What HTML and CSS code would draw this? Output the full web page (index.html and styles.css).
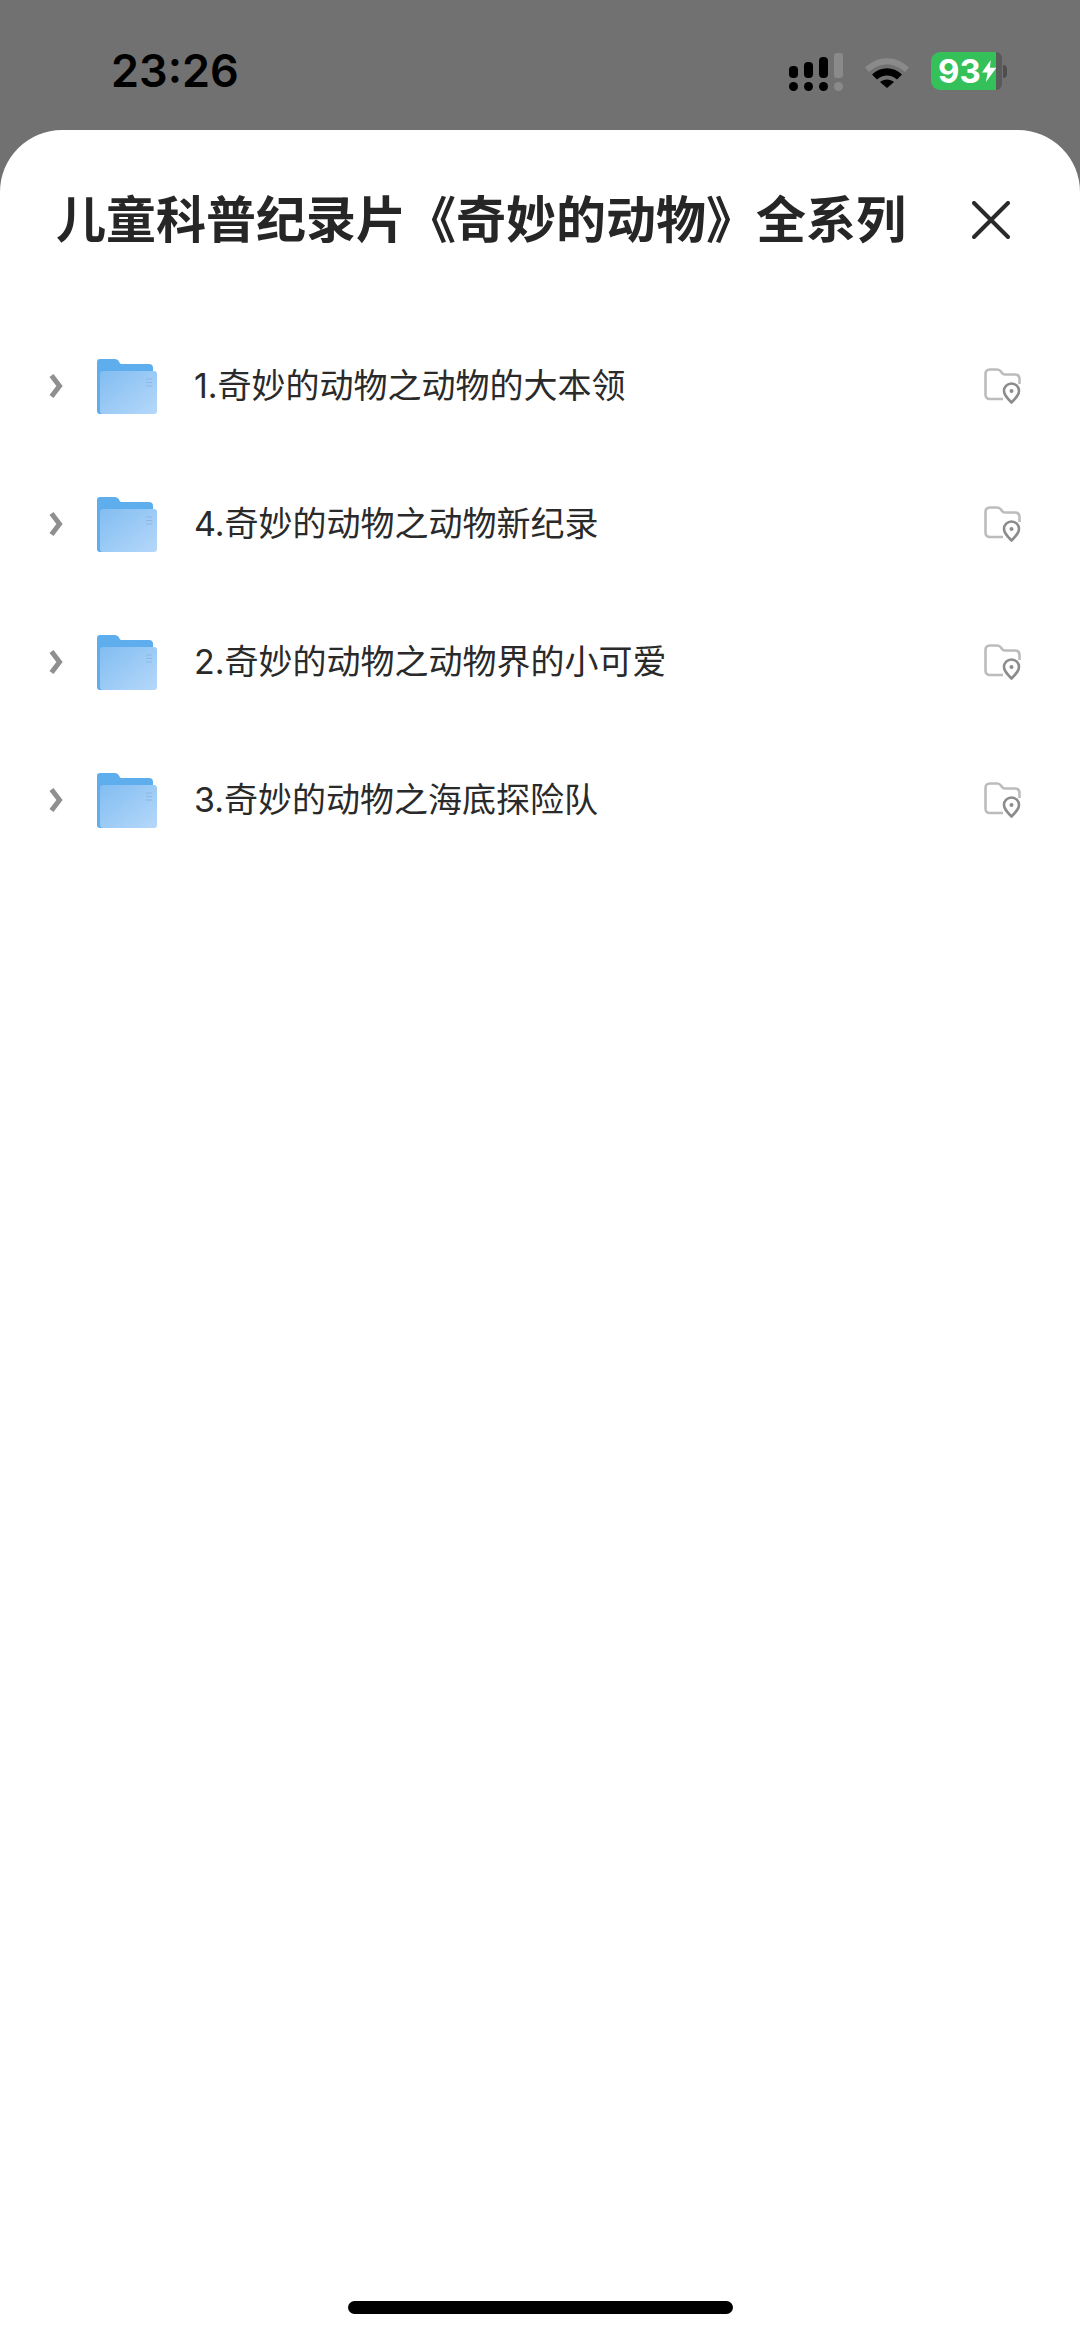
FILE: index.html
```html
<!DOCTYPE html>
<html lang="zh">
<head>
<meta charset="utf-8">
<title>儿童科普纪录片《奇妙的动物》全系列</title>
<link rel="stylesheet" href="styles.css">
</head>
<body>
<svg class="defs" width="0" height="0" aria-hidden="true">
  <defs>
    <linearGradient id="fold" x1="0" y1="0" x2="1" y2="1">
      <stop offset="0" stop-color="#82bdf1"/>
      <stop offset="1" stop-color="#b5d8fa"/>
    </linearGradient>
    <symbol id="chev" viewBox="0 0 14 26">
      <path d="M2.5 2.5 L10.5 13 L2.5 23.5" fill="none" stroke="#8f8f8f" stroke-width="5"/>
    </symbol>
    <symbol id="folder" viewBox="0 0 60 55">
      <path d="M3 0H18Q21 0 22 2.500L23 4.500Q24 5 26 5H52Q56 5 56 9V14H6V55H3Q0 55 0 52V3Q0 0 3 0Z" fill="#5eaded"/>
      <rect x="3" y="12" width="57" height="43" rx="3" fill="url(#fold)"/>
      <path d="M49 20h6M49 23.500h6M49 27h6" stroke="#8db8e0" stroke-width="1.200"/>
    </symbol>
    <symbol id="loc" viewBox="0 0 37 36">
      <path d="M19 31H6Q1.500 31 1.500 26.500V6Q1.500 1.500 6 1.500H13Q15.500 1.500 17 3.500L18 5Q19 6.500 21 6.500H31Q35.500 6.500 35.500 11V16" fill="none" stroke="#bcbcbc" stroke-width="2.600"/>
      <path d="M27.500 34.500C23 30 20 27 20 23A7.500 7.500 0 0 1 35 23C35 27 32 30 27.500 34.500Z" fill="#fff" stroke="#8c8c8c" stroke-width="2.600" stroke-linejoin="round"/>
      <circle cx="27.500" cy="23" r="2" fill="#8c8c8c"/>
    </symbol>
  </defs>
</svg>
<div class="screen">
  <header class="status">
    <span class="time">23:26</span>
    <div class="status-icons">
      <svg class="signal" width="54" height="38" viewBox="0 0 54 38">
        <rect x="0" y="13" width="9" height="12" rx="4"/>
        <rect x="15" y="9" width="9" height="16" rx="4"/>
        <rect x="30" y="4" width="9" height="21" rx="4"/>
        <rect x="45" y="0" width="9" height="25" rx="3" fill="#8a8a8a"/>
        <rect x="0" y="29" width="9" height="9" rx="4.500"/>
        <rect x="15" y="29" width="9" height="9" rx="4.500"/>
        <rect x="30" y="29" width="9" height="9" rx="4.500"/>
        <rect x="45" y="29" width="9" height="9" rx="4.500" fill="#8a8a8a"/>
      </svg>
      <svg class="wifi" width="46" height="34" viewBox="0 0 46 34">
        <path d="M1 13.500C14 1 32 1 45 13.500L41 18C30 8 16 8 5 18Z" fill="#8a8a8a"/>
        <path d="M8 20.500C17 12 29 12 38 20.500L33 25.500C27 20 19 20 13 25.500Z" fill="#000"/>
        <path d="M16 28C20 24.500 26 24.500 30 28L23 34Z" fill="#000"/>
      </svg>
      <div class="battery">
        <div class="battery-body">
          <span class="battery-num">93</span>
          <svg class="bolt" width="18" height="28" viewBox="0 0 18 28"><path d="M11 0L0 16H7L5 28L18 10H10Z" fill="#fff"/></svg>
        </div>
        <span class="battery-end"></span>
        <span class="battery-nub"></span>
      </div>
    </div>
  </header>
  <main class="sheet">
    <div class="sheet-head">
      <h1 class="title">儿童科普纪录片《奇妙的动物》全系列</h1>
      <svg class="close" width="38" height="38" viewBox="0 0 38 38"><path d="M2 2L36 36M36 2L2 36" stroke="#2a2a2a" stroke-width="4" stroke-linecap="round"/></svg>
    </div>
    <ul class="list">
      <li class="row">
        <svg class="chev"><use href="#chev"/></svg>
        <svg class="folder"><use href="#folder"/></svg>
        <span class="name">1.奇妙的动物之动物的大本领</span>
        <svg class="loc"><use href="#loc"/></svg>
      </li>
      <li class="row">
        <svg class="chev"><use href="#chev"/></svg>
        <svg class="folder"><use href="#folder"/></svg>
        <span class="name">4.奇妙的动物之动物新纪录</span>
        <svg class="loc"><use href="#loc"/></svg>
      </li>
      <li class="row">
        <svg class="chev"><use href="#chev"/></svg>
        <svg class="folder"><use href="#folder"/></svg>
        <span class="name">2.奇妙的动物之动物界的小可爱</span>
        <svg class="loc"><use href="#loc"/></svg>
      </li>
      <li class="row">
        <svg class="chev"><use href="#chev"/></svg>
        <svg class="folder"><use href="#folder"/></svg>
        <span class="name">3.奇妙的动物之海底探险队</span>
        <svg class="loc"><use href="#loc"/></svg>
      </li>
    </ul>
    <div class="home-bar"></div>
  </main>
</div>
</body>
</html>
```
FILE: styles.css
```css
* { box-sizing: border-box; }
html, body { margin: 0; padding: 0; background: #fff; }
.defs { position: absolute; }
.screen {
  width: 1080px;
  height: 2337px;
  display: flex;
  flex-direction: column;
  background: #717171;
  overflow: hidden;
  font-family: Inter, "Noto Sans CJK SC", sans-serif;
}
.status {
  height: 130px;
  flex: none;
  display: flex;
  justify-content: space-between;
  align-items: flex-start;
  padding: 0 73px 0 111px;
}
.time {
  margin-top: 44px;
  font-size: 45px;
  line-height: 54px;
  font-weight: 600;
  color: #000;
  letter-spacing: 0;
}
.status-icons {
  margin-top: 52px;
  display: flex;
  align-items: flex-start;
  gap: 21px;
}
.signal { margin-top: 1px; fill: #000; }
.wifi { margin-top: 2px; }
.battery {
  display: flex;
  align-items: center;
  height: 38px;
}
.battery-body {
  width: 65px;
  height: 38px;
  background: #35c159;
  border-radius: 9px 0 0 9px;
  display: flex;
  align-items: center;
  padding-left: 7px;
  gap: 0;
}
.battery-num {
  font-size: 33px;
  line-height: 38px;
  font-weight: 700;
  color: #fff;
}
.bolt { margin-left: 1px; }
.battery-end {
  width: 6px;
  height: 38px;
  background: #5a5a5a;
  border-radius: 0 9px 9px 0;
}
.battery-nub {
  width: 4px;
  height: 13px;
  margin-left: 1px;
  background: #4e4e4e;
  border-radius: 0 4px 4px 0;
}
.sheet {
  flex: 1;
  background: #fff;
  border-radius: 62px 62px 0 0;
  display: flex;
  flex-direction: column;
}
.sheet-head {
  display: flex;
  align-items: center;
  justify-content: space-between;
  height: 180px;
  padding: 0 70px 0 56px;
}
.title {
  margin: 0;
  font-size: 50px;
  line-height: 60px;
  font-weight: 700;
  color: #262626;
  font-family: Inter, "Noto Sans CJK SC", sans-serif;
  white-space: nowrap;
}
.close { flex: none; }
.list {
  list-style: none;
  margin: 0;
  padding: 7px 0 0;
  flex: 1;
}
.row {
  height: 138px;
  display: flex;
  align-items: center;
  padding: 0 59px 0 49px;
}
.chev { width: 14px; height: 26px; flex: none; }
.folder { width: 60px; height: 55px; flex: none; margin-left: 34px; }
.name {
  flex: 1;
  margin-left: 37px;
  font-size: 34px;
  line-height: 44px;
  color: #2a2a2a;
  white-space: nowrap;
}
.loc { width: 37px; height: 36px; flex: none; }
.home-bar {
  align-self: center;
  width: 385px;
  height: 13px;
  margin-bottom: 23px;
  background: #000;
  border-radius: 7px;
}
```
